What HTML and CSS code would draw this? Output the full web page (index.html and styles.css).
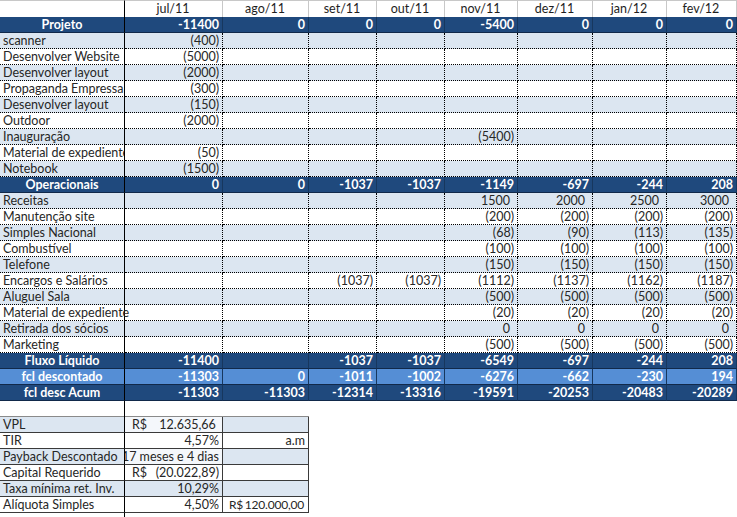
FILE: index.html
```html
<!DOCTYPE html>
<html lang="pt">
<head>
<meta charset="utf-8">
<title>Fluxo de caixa</title>
<link rel="stylesheet" href="styles.css">
</head>
<body>
<div class="sheet">
  <div class="row head">
    <div class="c lab"></div><div class="c">jul/11</div><div class="c">ago/11</div><div class="c">set/11</div><div class="c">out/11</div><div class="c">nov/11</div><div class="c">dez/11</div><div class="c">jan/12</div><div class="c">fev/12</div>
  </div>
  <div class="row band">
    <div class="c lab">Projeto</div><div class="c">-11400</div><div class="c">0</div><div class="c">0</div><div class="c">0</div><div class="c">-5400</div><div class="c">0</div><div class="c">0</div><div class="c">0</div>
  </div>
  <div class="row alt">
    <div class="c lab">scanner</div><div class="c">(400)</div><div class="c"></div><div class="c"></div><div class="c"></div><div class="c"></div><div class="c"></div><div class="c"></div><div class="c"></div>
  </div>
  <div class="row">
    <div class="c lab">Desenvolver Website</div><div class="c">(5000)</div><div class="c"></div><div class="c"></div><div class="c"></div><div class="c"></div><div class="c"></div><div class="c"></div><div class="c"></div>
  </div>
  <div class="row alt">
    <div class="c lab">Desenvolver layout</div><div class="c">(2000)</div><div class="c"></div><div class="c"></div><div class="c"></div><div class="c"></div><div class="c"></div><div class="c"></div><div class="c"></div>
  </div>
  <div class="row">
    <div class="c lab clip">Propaganda Empressa</div><div class="c">(300)</div><div class="c"></div><div class="c"></div><div class="c"></div><div class="c"></div><div class="c"></div><div class="c"></div><div class="c"></div>
  </div>
  <div class="row alt">
    <div class="c lab">Desenvolver layout</div><div class="c">(150)</div><div class="c"></div><div class="c"></div><div class="c"></div><div class="c"></div><div class="c"></div><div class="c"></div><div class="c"></div>
  </div>
  <div class="row">
    <div class="c lab">Outdoor</div><div class="c">(2000)</div><div class="c"></div><div class="c"></div><div class="c"></div><div class="c"></div><div class="c"></div><div class="c"></div><div class="c"></div>
  </div>
  <div class="row alt">
    <div class="c lab">Inauguração</div><div class="c"></div><div class="c"></div><div class="c"></div><div class="c"></div><div class="c">(5400)</div><div class="c"></div><div class="c"></div><div class="c"></div>
  </div>
  <div class="row">
    <div class="c lab clip">Material de expediente</div><div class="c">(50)</div><div class="c"></div><div class="c"></div><div class="c"></div><div class="c"></div><div class="c"></div><div class="c"></div><div class="c"></div>
  </div>
  <div class="row alt">
    <div class="c lab">Notebook</div><div class="c">(1500)</div><div class="c"></div><div class="c"></div><div class="c"></div><div class="c"></div><div class="c"></div><div class="c"></div><div class="c"></div>
  </div>
  <div class="row band">
    <div class="c lab">Operacionais</div><div class="c">0</div><div class="c">0</div><div class="c">-1037</div><div class="c">-1037</div><div class="c">-1149</div><div class="c">-697</div><div class="c">-244</div><div class="c">208</div>
  </div>
  <div class="row alt">
    <div class="c lab">Receitas</div><div class="c"></div><div class="c"></div><div class="c"></div><div class="c"></div><div class="c p">1500</div><div class="c p">2000</div><div class="c p">2500</div><div class="c p">3000</div>
  </div>
  <div class="row">
    <div class="c lab">Manutenção site</div><div class="c"></div><div class="c"></div><div class="c"></div><div class="c"></div><div class="c">(200)</div><div class="c">(200)</div><div class="c">(200)</div><div class="c">(200)</div>
  </div>
  <div class="row alt">
    <div class="c lab">Simples Nacional</div><div class="c"></div><div class="c"></div><div class="c"></div><div class="c"></div><div class="c">(68)</div><div class="c">(90)</div><div class="c">(113)</div><div class="c">(135)</div>
  </div>
  <div class="row">
    <div class="c lab">Combustível</div><div class="c"></div><div class="c"></div><div class="c"></div><div class="c"></div><div class="c">(100)</div><div class="c">(100)</div><div class="c">(100)</div><div class="c">(100)</div>
  </div>
  <div class="row alt">
    <div class="c lab">Telefone</div><div class="c"></div><div class="c"></div><div class="c"></div><div class="c"></div><div class="c">(150)</div><div class="c">(150)</div><div class="c">(150)</div><div class="c">(150)</div>
  </div>
  <div class="row">
    <div class="c lab">Encargos e Salários</div><div class="c"></div><div class="c"></div><div class="c">(1037)</div><div class="c">(1037)</div><div class="c">(1112)</div><div class="c">(1137)</div><div class="c">(1162)</div><div class="c">(1187)</div>
  </div>
  <div class="row alt">
    <div class="c lab">Aluguel Sala</div><div class="c"></div><div class="c"></div><div class="c"></div><div class="c"></div><div class="c">(500)</div><div class="c">(500)</div><div class="c">(500)</div><div class="c">(500)</div>
  </div>
  <div class="row">
    <div class="c lab">Material de expediente</div><div class="c"></div><div class="c"></div><div class="c"></div><div class="c"></div><div class="c">(20)</div><div class="c">(20)</div><div class="c">(20)</div><div class="c">(20)</div>
  </div>
  <div class="row alt">
    <div class="c lab">Retirada dos sócios</div><div class="c"></div><div class="c"></div><div class="c"></div><div class="c"></div><div class="c p">0</div><div class="c p">0</div><div class="c p">0</div><div class="c p">0</div>
  </div>
  <div class="row">
    <div class="c lab">Marketing</div><div class="c"></div><div class="c"></div><div class="c"></div><div class="c"></div><div class="c">(500)</div><div class="c">(500)</div><div class="c">(500)</div><div class="c">(500)</div>
  </div>
  <div class="row band">
    <div class="c lab">Fluxo Líquido</div><div class="c">-11400</div><div class="c"></div><div class="c">-1037</div><div class="c">-1037</div><div class="c">-6549</div><div class="c">-697</div><div class="c">-244</div><div class="c">208</div>
  </div>
  <div class="row band light">
    <div class="c lab">fcl descontado</div><div class="c">-11303</div><div class="c">0</div><div class="c">-1011</div><div class="c">-1002</div><div class="c">-6276</div><div class="c">-662</div><div class="c">-230</div><div class="c">194</div>
  </div>
  <div class="row band">
    <div class="c lab">fcl desc Acum</div><div class="c">-11303</div><div class="c">-11303</div><div class="c">-12314</div><div class="c">-13316</div><div class="c">-19591</div><div class="c">-20253</div><div class="c">-20483</div><div class="c">-20289</div>
  </div>
  <div class="row blank">
    <div class="c lab"></div>
  </div>

  <div class="sum">
    <div class="srow alt">
      <div class="s slab">VPL</div>
      <div class="s acc white"><span>R$</span><span>12.635,66&nbsp;</span></div>
      <div class="s"></div>
    </div>
    <div class="srow">
      <div class="s slab">TIR</div>
      <div class="s num">4,57%</div>
      <div class="s num">a.m</div>
    </div>
    <div class="srow alt">
      <div class="s slab">Payback Descontado</div>
      <div class="s over white"><span>17 meses e 4 dias</span></div>
      <div class="s"></div>
    </div>
    <div class="srow">
      <div class="s slab">Capital Requerido</div>
      <div class="s acc"><span>R$</span><span>(20.022,89)</span></div>
      <div class="s"></div>
    </div>
    <div class="srow alt">
      <div class="s slab">Taxa mínima ret. Inv.</div>
      <div class="s num">10,29%</div>
      <div class="s"></div>
    </div>
    <div class="srow">
      <div class="s slab">Alíquota Simples</div>
      <div class="s num">4,50%</div>
      <div class="s acc tight"><span>R$</span><span>120.000,00</span></div>
    </div>
  </div>
  <div class="tail"></div>
</div>
</body>
</html>
```
FILE: styles.css
```css
html, body {
  margin: 0;
  padding: 0;
  background: #ffffff;
}

.sheet {
  width: 737px;
  font-family: "Lato", "Liberation Sans", sans-serif;
  font-size: 12.5px;
  color: #262626;
}

.row {
  display: grid;
  grid-template-columns: 125px 98px 86px 68px 68px 73px 75px 74px 70px;
  height: 16px;
}

.row.alt {
  background: #dce6f1;
}

.c {
  box-sizing: border-box;
  height: 16px;
  line-height: 15px;
  padding: 0 3px 0 2px;
  text-align: right;
  white-space: nowrap;
  border-bottom: 1px dotted #000;
  border-right: 1px dotted #000;
}

.c.p {
  padding-right: 7px;
}

.c.lab {
  text-align: left;
  padding-left: 3px;
  border-right: 1px solid #000;
}

.c.clip {
  overflow: hidden;
}

/* header */
.row.head {
  height: 17px;
}

.row.head .c {
  height: 17px;
  line-height: 16px;
  text-align: center;
  border-top: 1px solid #c8c8c8;
  border-bottom: none;
  border-right: 1px solid #c8c8c8;
  color: #1e1e1e;
}

.row.head .c.lab {
  border-right: 1px solid #000;
}

/* dark bands */
.row.band {
  background: #1f497d;
}

.row.band.light {
  background: #558ed5;
}

.row.band .c {
  color: #ffffff;
  font-weight: 700;
  border-bottom: 1px solid #11294a;
  border-right: 1px solid #17375e;
}

.row.band .c.lab {
  text-align: center;
  border-right: 1px solid #000;
}

/* spacer */
.row.blank .c {
  border-bottom: none;
}

/* summary block */
.sum {
  width: 309px;
  border-top: 1px solid #8a8a8a;
  margin-top: -1px;
}

.srow {
  display: grid;
  grid-template-columns: 125px 98px 86px;
  height: 16px;
}

.srow.alt .s {
  background: #dce6f1;
}

.srow.alt .s.white {
  background: #f4f7fb;
}

.s {
  box-sizing: border-box;
  height: 16px;
  line-height: 15px;
  padding: 0 3px;
  white-space: nowrap;
  border-bottom: 1px solid #3a3a3a;
  border-right: 1px solid #3a3a3a;
}

.s.slab {
  padding-left: 3px;
  border-right: 1px solid #000;
}

.s.num {
  text-align: right;
}

.s.acc {
  display: flex;
  justify-content: space-between;
  padding-left: 7px;
}

.s.acc.tight {
  padding-left: 6px;
  padding-right: 4px;
  font-size: 12px;
  letter-spacing: -0.2px;
}

.s.over {
  display: flex;
  justify-content: flex-end;
  overflow: hidden;
  padding-right: 3px;
}

.s.over span {
  flex: none;
}

.tail {
  width: 125px;
  height: 4px;
  box-sizing: border-box;
  border-right: 1px solid #000;
}
```
